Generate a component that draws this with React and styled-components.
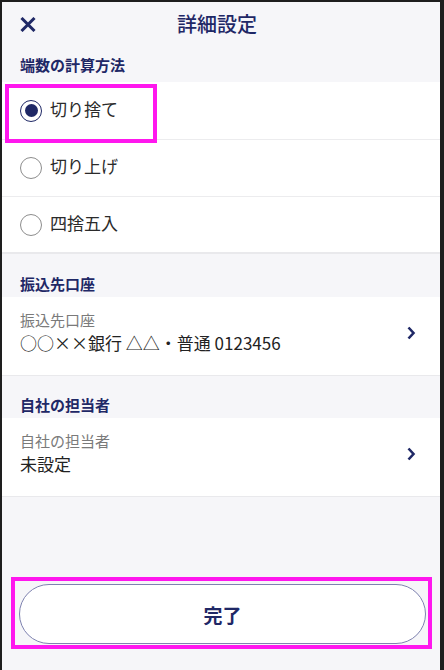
import React, { useState } from 'react'
import styled, { createGlobalStyle } from 'styled-components'

const NAVY = '#1f2866'

const GlobalStyle = createGlobalStyle`
  html, body {
    margin: 0;
    padding: 0;
    background: #1e1e1e;
  }
  body {
    font-family: "Noto Sans CJK JP", "Noto Sans", sans-serif;
  }
`

const Screen = styled.div`
  margin: 2px 4px 0 2px;
  height: 668px;
  background: #f6f6f9;
  display: flex;
  flex-direction: column;
  overflow: hidden;
`

const Header = styled.header`
  height: 44px;
  display: flex;
  align-items: center;
  justify-content: center;
  padding-right: 8px;
  position: relative;
`

const CloseButton = styled.button`
  position: absolute;
  left: 14px;
  top: 11px;
  width: 24px;
  height: 22px;
  padding: 0;
  border: none;
  background: none;
  display: flex;
  align-items: center;
  justify-content: center;
`

const Title = styled.h1`
  margin: 0;
  font-size: 20px;
  font-weight: 500;
  color: ${NAVY};
  line-height: 1;
`

const SectionHead = styled.div`
  height: ${p => p.$h}px;
  display: flex;
  align-items: flex-end;
  padding: 0 0 ${p => p.$pb}px 18px;
  box-sizing: border-box;
  font-size: 15px;
  font-weight: 700;
  color: ${NAVY};
  line-height: 22px;
`

const List = styled.div`
  background: #fff;
  border-bottom: ${p => p.$thick ? '2px' : '1px'} solid #e9e9ec;
`

const OptionRow = styled.label`
  position: relative;
  display: flex;
  align-items: center;
  gap: 8px;
  height: ${p => p.$h}px;
  padding-left: 18px;
  border-bottom: ${p => p.$last ? 'none' : '1px solid #ececee'};
  font-size: 17px;
  color: #2b2b2b;
  cursor: pointer;
`

const OptionText = styled.span`
  line-height: 24px;
  margin-bottom: 4px;
`

const Radio = styled.span`
  width: 22px;
  height: 22px;
  box-sizing: border-box;
  border-radius: 50%;
  border: 1.5px solid ${p => p.$on ? NAVY : '#8d8d8d'};
  display: flex;
  align-items: center;
  justify-content: center;
  &::after {
    content: '';
    width: 13px;
    height: 13px;
    border-radius: 50%;
    background: ${p => p.$on ? NAVY : 'transparent'};
  }
`

const Highlight = styled.div`
  position: absolute;
  left: ${p => p.$l}px;
  top: ${p => p.$t}px;
  width: ${p => p.$w}px;
  height: ${p => p.$h}px;
  border: 4px solid #ff17ee;
  box-sizing: border-box;
  pointer-events: none;
`

const LinkRow = styled.div`
  display: flex;
  align-items: center;
  padding: 12px 24px 18px 18px;
  cursor: pointer;
`

const LinkText = styled.div`
  flex: 1;
  display: flex;
  flex-direction: column;
`

const SubLabel = styled.span`
  font-size: 15px;
  line-height: 22px;
  color: #7a7a7a;
`

const Value = styled.span`
  font-size: 17px;
  line-height: 24px;
  margin-bottom: 2px;
  color: #222;
`

const Spacer = styled.div`
  flex: 1;
`

const Footer = styled.div`
  position: relative;
  padding: 0 14px 26px 17px;
`

const DoneButton = styled.button`
  width: 100%;
  height: 60px;
  border-radius: 30px;
  border: 1px solid #7e82b0;
  background: #fff;
  font-family: inherit;
  font-size: 19px;
  font-weight: 700;
  color: ${NAVY};
`

const Chevron = () => (
  <svg width="10" height="14" viewBox="0 0 10 14">
    <path d="M2.5 1.5 L7.5 7 L2.5 12.5" fill="none" stroke={NAVY} strokeWidth="2.6" />
  </svg>
)

const options = [
  { id: 'down', label: '切り捨て', h: 57 },
  { id: 'up', label: '切り上げ', h: 56 },
  { id: 'round', label: '四捨五入', h: 55 },
]

function App() {
  const [mode, setMode] = useState('down')

  return (
    <>
      <GlobalStyle />
      <Screen>
        <Header>
          <CloseButton aria-label="閉じる">
            <svg width="16" height="15" viewBox="0 0 16 15">
              <path d="M1.5 1 L14.5 14 M14.5 1 L1.5 14" stroke={NAVY} strokeWidth="3" />
            </svg>
          </CloseButton>
          <Title>詳細設定</Title>
        </Header>

        <SectionHead $h={36} $pb={6}>端数の計算方法</SectionHead>
        <List $thick>
          {options.map((o, i) => (
            <OptionRow
              key={o.id}
              $h={o.h}
              $last={i === options.length - 1}
              onClick={() => setMode(o.id)}
            >
              <Radio $on={mode === o.id} />
              <OptionText>{o.label}</OptionText>
              {i === 0 && <Highlight $l={3} $t={2} $w={152} $h={59} />}
            </OptionRow>
          ))}
        </List>

        <SectionHead $h={43} $pb={2}>振込先口座</SectionHead>
        <List>
          <LinkRow>
            <LinkText>
              <SubLabel>振込先口座</SubLabel>
              <Value>○○××銀行 △△・普通 0123456</Value>
            </LinkText>
            <Chevron />
          </LinkRow>
        </List>

        <SectionHead $h={42} $pb={2}>自社の担当者</SectionHead>
        <List>
          <LinkRow>
            <LinkText>
              <SubLabel>自社の担当者</SubLabel>
              <Value>未設定</Value>
            </LinkText>
            <Chevron />
          </LinkRow>
        </List>

        <Spacer />
        <Footer>
          <DoneButton>完了</DoneButton>
          <Highlight $l={9} $t={-7} $w={421} $h={72} />
        </Footer>
      </Screen>
    </>
  )
}

export default App
